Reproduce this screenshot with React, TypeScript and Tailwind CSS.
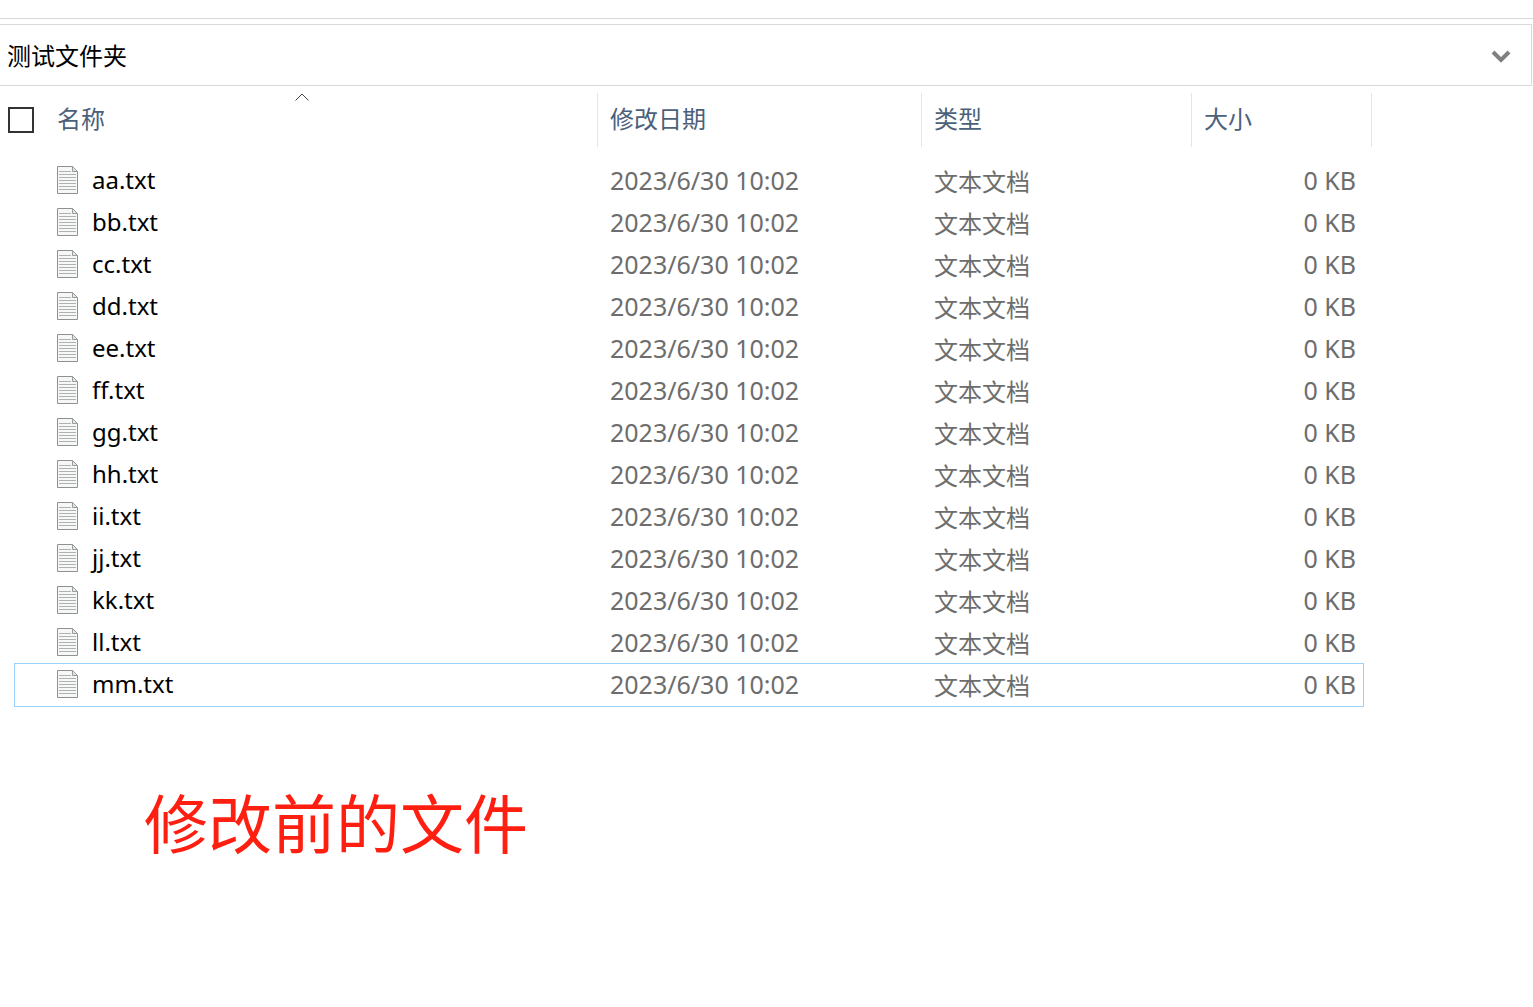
const names = ['aa', 'bb', 'cc', 'dd', 'ee', 'ff', 'gg', 'hh', 'ii', 'jj', 'kk', 'll', 'mm'];

function TextFileIcon() {
  return (
    <svg width="22" height="28" viewBox="0 0 22 28" fill="none" aria-hidden="true" className="shrink-0">
      <path d="M.5.5h15l5 5v22H.5z" fill="#f6f8f8" stroke="#8f9190" />
      <path d="M15.5.5v5h5z" fill="#e4e6e6" stroke="#9a9c9b" />
      <path d="M2 5.5h12M2 8.5h17M2 11.5h17M2 14.5h17M2 17.5h17M2 20.5h17M2 23.5h17" stroke="#b0b2b2" />
    </svg>
  );
}

function AddressBar() {
  return (
    <div className="mt-[18px] border-t border-[#d9d9d9] pt-[5px]">
      <div className="mr-px flex h-[62px] items-center border-y border-r border-[#d9d9d9] pt-px">
        <input
          aria-label="地址"
          defaultValue="测试文件夹"
          className="min-w-0 flex-1 bg-transparent pl-[7px] text-2xl text-black outline-none"
        />
        <button type="button" aria-label="展开" className="flex h-full w-15 items-center justify-center">
          <svg width="20" height="14" viewBox="0 0 20 14" fill="none" aria-hidden="true">
            <path d="M2 3l8 8 8-8" stroke="#808080" strokeWidth="4" />
          </svg>
        </button>
      </div>
    </div>
  );
}

function FileTable() {
  const head = 'h-[54px] border-r border-[#e5e5e5] p-0 pb-0.5 text-left font-normal text-[#4c607a]';
  return (
    <table className="mt-[7px] w-[1372px] table-fixed border-separate border-spacing-0">
      <colgroup>
        <col className="w-[57px]" />
        <col className="w-[541px]" />
        <col className="w-[324px]" />
        <col className="w-[270px]" />
        <col className="w-[180px]" />
      </colgroup>
      <thead>
        <tr>
          <th className="h-[54px] p-0 pl-2">
            <input
              type="checkbox"
              aria-label="全选"
              className="block size-[26px] appearance-none border-2 border-[#333333] bg-white checked:bg-[#333333]"
            />
          </th>
          <th className={`${head} relative`}>
            <button type="button">名称</button>
            <svg
              width="14"
              height="8"
              viewBox="0 0 14 8"
              fill="none"
              aria-hidden="true"
              className="absolute top-0 left-[238px]"
            >
              <path d="M.5 7.5l6.5-6.5 6.5 6.5" stroke="#444444" />
            </svg>
          </th>
          <th className={`${head} pl-3`}>
            <button type="button">修改日期</button>
          </th>
          <th className={`${head} pl-3`}>
            <button type="button">类型</button>
          </th>
          <th className={`${head} pl-3`}>
            <button type="button">大小</button>
          </th>
        </tr>
      </thead>
      <tbody className="before:block before:h-[13px] before:content-['']">
        {names.map((name) => (
          <tr key={name} className="relative text-[#6d6d6d]">
            <td className="h-[42px] p-0">
              {name === 'mm' && (
                <div className="pointer-events-none absolute -top-px right-2 -bottom-px left-[14px] border border-[#99d1ff]" />
              )}
            </td>
            <td className="p-0 pb-0.5 leading-8 text-black">
              <div className="flex items-center gap-[13px]">
                <TextFileIcon />
                <span>{name}.txt</span>
              </div>
            </td>
            <td className="p-0 pb-0.5 pl-3 text-[25px] leading-8">2023/6/30 10:02</td>
            <td className="p-0 pt-0.5 pl-3">文本文档</td>
            <td className="p-0 pr-4 pb-0.5 text-right text-[25px] leading-8">0 KB</td>
          </tr>
        ))}
      </tbody>
    </table>
  );
}

export default function App() {
  return (
    <main className="flow-root min-h-screen bg-white font-['Noto_Sans','Noto_Sans_CJK_SC',sans-serif] text-2xl">
      <AddressBar />
      <FileTable />
      <p className="mt-[70px] ml-36 text-[64px] leading-[96px] text-[#ff1f10]">修改前的文件</p>
    </main>
  );
}
